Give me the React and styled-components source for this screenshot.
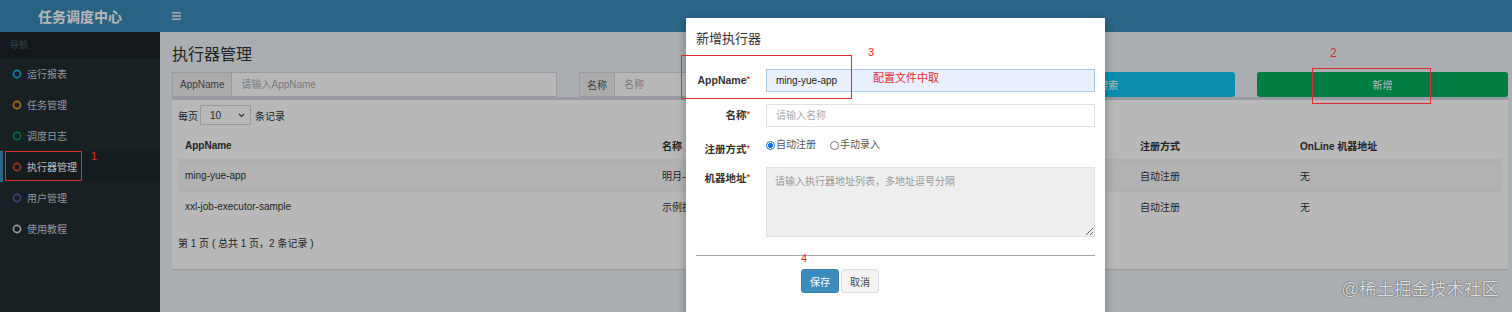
import React from 'react';
import styled, { createGlobalStyle } from 'styled-components';

const GlobalStyle = createGlobalStyle`
  html, body { margin: 0; padding: 0; }
  body {
    font-family: "Liberation Sans", "Noto Sans CJK SC", sans-serif;
    font-size: 10px;
    color: #333;
  }
  * { box-sizing: border-box; }
`;

const Page = styled.div`
  position: relative;
  display: flex;
  width: 1512px;
  height: 312px;
  overflow: hidden;
`;

// sidebar
const Sidebar = styled.aside`
  width: 160px;
  flex-shrink: 0;
  display: flex;
  flex-direction: column;
  background: #222d32;
`;

const Logo = styled.div`
  height: 32px;
  display: flex;
  align-items: center;
  justify-content: center;
  background: #3a8ab8;
  color: #fff;
  font-size: 14px;
  font-weight: bold;
`;

const NavHeader = styled.div`
  height: 26px;
  line-height: 26px;
  padding-left: 10px;
  background: #1a2226;
  color: #4b646f;
  font-size: 9px;
`;

const NavItem = styled.div`
  height: 31px;
  display: flex;
  align-items: center;
  gap: 5px;
  padding-left: 9px;
  border-left: 3px solid ${(p) => (p.$active ? '#3c8dbc' : 'transparent')};
  background: ${(p) => (p.$active ? '#1e282c' : 'transparent')};
  color: ${(p) => (p.$active ? '#fff' : '#c4d0d6')};
  font-size: 10px;
`;

const Ring = ({ color }) => (
  <svg width="10" height="10" viewBox="0 0 10 10">
    <circle cx="5" cy="5" r="3.6" fill="none" stroke={color} strokeWidth="1.6" />
  </svg>
);

// main area
const Main = styled.div`
  flex: 1;
  display: flex;
  flex-direction: column;
`;

const TopBar = styled.header`
  height: 32px;
  display: flex;
  align-items: center;
  padding-left: 12px;
  background: #3c8dbc;
`;

const Content = styled.section`
  flex: 1;
  padding: 12px 4px 0 12px;
  background: #ecf0f5;
`;

const PageTitle = styled.h1`
  margin: 0 0 6px;
  font-size: 16px;
  line-height: 22px;
  font-weight: normal;
  color: #333;
`;

const SearchRow = styled.div`
  display: grid;
  grid-template-columns: 385px 380px 254px 251px;
  column-gap: 22px;
  height: 25px;
`;

const InputGroup = styled.div`
  display: flex;
  height: 25px;
`;

const Addon = styled.span`
  display: flex;
  align-items: center;
  padding: 0 7px;
  background: #eee;
  border: 1px solid #d2d6de;
  color: #555;
`;

const Field = styled.input`
  flex: 1;
  min-width: 0;
  height: 100%;
  padding: 0 9px;
  border: 1px solid #d2d6de;
  border-left: none;
  background: #fff;
  font: inherit;
  outline: none;
  &::placeholder { color: #aaa; }
`;

const Button = styled.button`
  height: 25px;
  border: none;
  border-radius: 3px;
  background: ${(p) => p.$bg};
  color: #fff;
  font: inherit;
`;

const Box = styled.div`
  border-top: 3px solid #d2d6de;
  background: #fff;
  padding: 5px 6px 17px;
  box-shadow: 0 1px 1px rgba(0, 0, 0, 0.1);
`;

const LengthRow = styled.div`
  display: flex;
  align-items: center;
  gap: 2px;
  height: 20px;
  color: #333;
`;

const SelectBox = styled.div`
  width: 51px;
  height: 20px;
  display: flex;
  align-items: center;
  justify-content: space-between;
  padding: 0 5px 0 9px;
  margin-right: 2px;
  border: 1px solid #d2d6de;
  background: #fff;
`;

const Table = styled.table`
  width: 100%;
  margin-top: 7px;
  border-collapse: collapse;
  table-layout: fixed;

  th {
    height: 28px;
    padding: 0 7px;
    text-align: left;
    font-weight: bold;
    border-bottom: 2px solid #f4f4f4;
  }
  td {
    height: 31px;
    padding: 0 7px;
    border-top: 1px solid #f4f4f4;
    white-space: nowrap;
    overflow: hidden;
  }
  tbody tr:nth-child(odd) { background: #f7f7f7; }
`;

const Info = styled.div`
  margin-top: 14px;
  line-height: 16px;
`;

// modal
const Backdrop = styled.div`
  position: absolute;
  inset: 0;
  background: rgba(0, 0, 0, 0.28);
`;

const Modal = styled.div`
  position: absolute;
  left: 686px;
  top: 18px;
  width: 419px;
  height: 310px;
  background: #fff;
  box-shadow: 0 3px 9px rgba(0, 0, 0, 0.3);
`;

const ModalTitle = styled.h4`
  margin: 0;
  padding: 10px 10px 9px;
  font-size: 13px;
  line-height: 22px;
  font-weight: normal;
  color: #333;
`;

const ModalBody = styled.div`
  padding-top: 10px;
`;

const FormRow = styled.div`
  display: grid;
  grid-template-columns: 64px 329px;
  column-gap: 16px;
  align-items: start;
  height: ${(p) => p.$h}px;
  margin-bottom: ${(p) => p.$mb}px;
`;

const Label = styled.label`
  display: block;
  text-align: right;
  font-size: 10.5px;
  font-weight: bold;
  line-height: 23px;
  height: 23px;
  color: #333;
  white-space: nowrap;
`;

const Req = styled.sup`
  color: #dd4b39;
  font-size: 9px;
  line-height: 0;
  vertical-align: 2px;
`;

const FormInput = styled.input`
  height: 23px;
  padding: 0 9px;
  border: 1px solid ${(p) => (p.$filled ? '#a9c8e6' : '#e0e0e0')};
  background: ${(p) => (p.$filled ? '#e8f0fe' : '#fff')};
  color: #222;
  font: inherit;
  outline: none;
  &::placeholder { color: #aaa; }
`;

const RadioGroup = styled.div`
  display: flex;
  align-items: flex-start;
  gap: 14px;
  height: 14px;
`;

const RadioOption = styled.span`
  display: flex;
  align-items: center;
  gap: 1px;
  line-height: 14px;
  color: #555;
`;

const RadioDot = styled.span`
  width: 9px;
  height: 9px;
  border-radius: 50%;
  border: 1px solid ${(p) => (p.$on ? '#1a73e8' : '#777')};
  background: ${(p) => (p.$on ? 'radial-gradient(circle, #1a73e8 0 2.4px, #fff 2.8px)' : '#fff')};
`;

const TextArea = styled.textarea`
  display: block;
  height: 70px;
  padding: 5px 8px;
  border: 1px solid #e0e0e0;
  background: #eee;
  font: inherit;
  outline: none;
  &::placeholder { color: #999; }
`;

const Divider = styled.hr`
  display: block;
  height: 0;
  margin: 18px 10px 0;
  border: none;
  border-top: 1px solid #a8a8a8;
`;

const Actions = styled.div`
  display: flex;
  gap: 2px;
  margin-top: 13px;
  padding-left: 115px;
`;

const ModalButton = styled.button`
  width: 38px;
  height: 24px;
  padding: 0;
  border-radius: 3px;
  border: 1px solid ${(p) => (p.$primary ? '#367fa9' : '#ddd')};
  background: ${(p) => (p.$primary ? '#3c8dbc' : '#f4f4f4')};
  color: ${(p) => (p.$primary ? '#fff' : '#444')};
  font: inherit;
`;

// red annotations drawn over the screenshot
const MarkBox = styled.div`
  position: absolute;
  left: ${(p) => p.$x}px;
  top: ${(p) => p.$y}px;
  width: ${(p) => p.$w}px;
  height: ${(p) => p.$h}px;
  border: 1.5px solid #e12d2d;
`;

const MarkText = styled.span`
  position: absolute;
  left: ${(p) => p.$x}px;
  top: ${(p) => p.$y}px;
  color: #e12d2d;
  font-size: ${(p) => p.$size || 11}px;
  line-height: 12px;
  white-space: nowrap;
`;

const Watermark = styled.div`
  position: absolute;
  right: 13px;
  top: 279px;
  font-size: 17.5px;
  line-height: 20px;
  color: #d8dbdd;
  text-shadow: 0 0 1px #555, 0 0 1px #555;
  white-space: nowrap;
`;

const navItems = [
  { label: '运行报表', color: '#00c0ef' },
  { label: '任务管理', color: '#f39c12' },
  { label: '调度日志', color: '#00a65a' },
  { label: '执行器管理', color: '#dd4b39', active: true },
  { label: '用户管理', color: '#605ca8' },
  { label: '使用教程', color: '#d2d6de' },
];

const rows = [
  { app: 'ming-yue-app', title: '明月-执行器', type: '自动注册', addr: '无' },
  { app: 'xxl-job-executor-sample', title: '示例执行器', type: '自动注册', addr: '无' },
];

export default function App() {
  return (
    <Page>
      <GlobalStyle />
      <Sidebar>
        <Logo>任务调度中心</Logo>
        <NavHeader>导航</NavHeader>
        {navItems.map((item) => (
          <NavItem key={item.label} $active={item.active}>
            <Ring color={item.color} />
            {item.label}
          </NavItem>
        ))}
      </Sidebar>

      <Main>
        <TopBar>
          <svg width="9" height="8" viewBox="0 0 9 8">
            <rect y="0" width="9" height="1.6" fill="#e6eef4" />
            <rect y="3.2" width="9" height="1.6" fill="#e6eef4" />
            <rect y="6.4" width="9" height="1.6" fill="#e6eef4" />
          </svg>
        </TopBar>
        <Content>
          <PageTitle>执行器管理</PageTitle>
          <SearchRow>
            <InputGroup>
              <Addon>AppName</Addon>
              <Field placeholder="请输入AppName" readOnly />
            </InputGroup>
            <InputGroup>
              <Addon>名称</Addon>
              <Field placeholder="名称" readOnly />
            </InputGroup>
            <Button $bg="#10c4f4">搜索</Button>
            <Button $bg="#03ad5f">新增</Button>
          </SearchRow>
          <Box>
            <LengthRow>
              每页
              <SelectBox>
                10
                <svg width="7" height="5" viewBox="0 0 7 5">
                  <path d="M1 1l2.5 2.5L6 1" fill="none" stroke="#444" strokeWidth="1.2" />
                </svg>
              </SelectBox>
              条记录
            </LengthRow>
            <Table>
              <colgroup>
                <col style={{ width: 477 }} />
                <col style={{ width: 478 }} />
                <col style={{ width: 160 }} />
                <col />
              </colgroup>
              <thead>
                <tr>
                  <th>AppName</th>
                  <th>名称</th>
                  <th>注册方式</th>
                  <th>OnLine 机器地址</th>
                </tr>
              </thead>
              <tbody>
                {rows.map((r) => (
                  <tr key={r.app}>
                    <td>{r.app}</td>
                    <td>{r.title}</td>
                    <td>{r.type}</td>
                    <td>{r.addr}</td>
                  </tr>
                ))}
              </tbody>
            </Table>
            <Info>第 1 页 ( 总共 1 页，2 条记录 )</Info>
          </Box>
        </Content>
      </Main>

      <Backdrop />

      <Modal>
        <ModalTitle>新增执行器</ModalTitle>
        <ModalBody>
          <FormRow $h={23} $mb={12}>
            <Label>AppName<Req>*</Req></Label>
            <FormInput $filled value="ming-yue-app" readOnly />
          </FormRow>
          <FormRow $h={23} $mb={11}>
            <Label>名称<Req>*</Req></Label>
            <FormInput placeholder="请输入名称" readOnly />
          </FormRow>
          <FormRow $h={22} $mb={7}>
            <Label>注册方式<Req>*</Req></Label>
            <RadioGroup>
              <RadioOption><RadioDot $on />自动注册</RadioOption>
              <RadioOption><RadioDot />手动录入</RadioOption>
            </RadioGroup>
          </FormRow>
          <FormRow $h={70} $mb={0}>
            <Label>机器地址<Req>*</Req></Label>
            <TextArea placeholder="请输入执行器地址列表，多地址逗号分隔" readOnly />
          </FormRow>
          <Divider />
          <Actions>
            <ModalButton $primary>保存</ModalButton>
            <ModalButton>取消</ModalButton>
          </Actions>
        </ModalBody>
      </Modal>

      <MarkBox $x={5} $y={151} $w={77} $h={30} />
      <MarkText $x={91} $y={150}>1</MarkText>
      <MarkBox $x={1312} $y={68} $w={119} $h={36} />
      <MarkText $x={1330} $y={47} $size={12}>2</MarkText>
      <MarkBox $x={681} $y={55} $w={171} $h={44} />
      <MarkText $x={868} $y={46}>3</MarkText>
      <MarkText $x={873} $y={72}>配置文件中取</MarkText>
      <MarkText $x={801} $y={252}>4</MarkText>

      <Watermark>@稀土掘金技术社区</Watermark>
    </Page>
  );
}
